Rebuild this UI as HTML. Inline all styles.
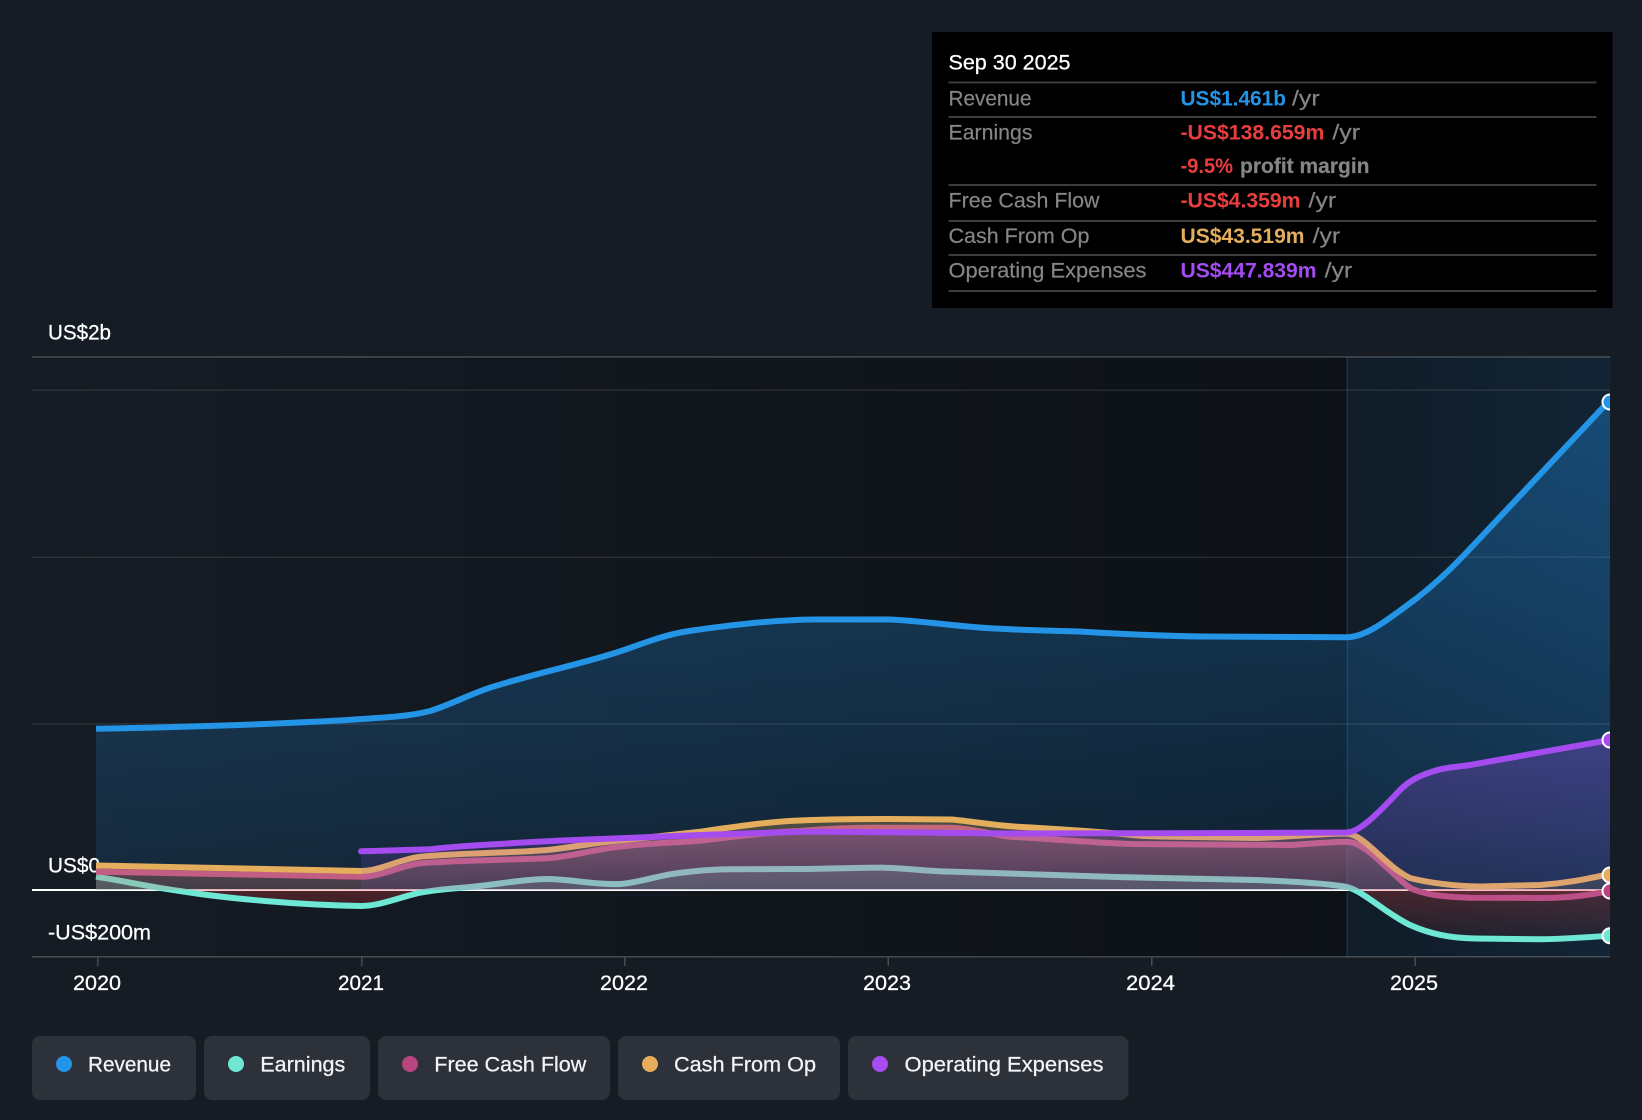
<!DOCTYPE html>
<html><head><meta charset="utf-8"><title>Chart</title>
<style>html,body{margin:0;padding:0;background:#151c24;width:1642px;height:1120px;overflow:hidden}
svg{display:block}text{font-family:"Liberation Sans",Arial,sans-serif;font-size:21px}
.l{fill:#fff;stroke:#fff;stroke-width:.25}.g{fill:#858585;stroke:#858585;stroke-width:.2}.b{font-weight:bold}.t{fill:#f3f4f6;stroke:#f3f4f6;stroke-width:.25}</style></head><body>
<svg width="1642" height="1120" viewBox="0 0 1642 1120" xmlns="http://www.w3.org/2000/svg">
<defs>
<linearGradient id="ov" x1="0" x2="1" y1="0" y2="0"><stop offset="0" stop-color="#000" stop-opacity="0"/><stop offset="1" stop-color="#000" stop-opacity=".38"/></linearGradient>
<linearGradient id="fc" x1="0" x2="1" y1="0" y2="0"><stop offset="0" stop-color="#101c27"/><stop offset="1" stop-color="#122435"/></linearGradient>
<linearGradient id="gR" gradientUnits="userSpaceOnUse" x1="0" x2="0" y1="402" y2="890"><stop offset="0" stop-color="#2196f3" stop-opacity=".34"/><stop offset="1" stop-color="#2196f3" stop-opacity=".11"/></linearGradient>
<linearGradient id="gC" gradientUnits="userSpaceOnUse" x1="0" x2="0" y1="820" y2="890"><stop offset="0" stop-color="#e4ae5c" stop-opacity=".28"/><stop offset="1" stop-color="#e4ae5c" stop-opacity=".12"/></linearGradient>
<linearGradient id="gF" gradientUnits="userSpaceOnUse" x1="0" x2="0" y1="828" y2="890"><stop offset="0" stop-color="#b84a85" stop-opacity=".32"/><stop offset="1" stop-color="#b84a85" stop-opacity=".14"/></linearGradient>
<linearGradient id="gO" gradientUnits="userSpaceOnUse" x1="0" x2="0" y1="740" y2="890"><stop offset="0" stop-color="#a855f7" stop-opacity=".28"/><stop offset="1" stop-color="#a855f7" stop-opacity=".1"/></linearGradient>
<linearGradient id="gN" gradientUnits="userSpaceOnUse" x1="0" x2="0" y1="889" y2="940"><stop offset="0" stop-color="#e83e3e" stop-opacity=".26"/><stop offset="1" stop-color="#e83e3e" stop-opacity=".06"/></linearGradient>
<clipPath id="chart"><rect x="32" y="340" width="1578" height="640"/></clipPath>
<clipPath id="pos"><rect x="32" y="340" width="1578" height="550"/></clipPath>
<clipPath id="neg"><rect x="32" y="889" width="1578" height="70"/></clipPath>
</defs>
<rect width="1642" height="1120" fill="#151c24"/>

<!-- backgrounds -->
<rect x="32" y="357" width="1315" height="600" fill="url(#ov)"/>
<rect x="1347" y="357" width="263" height="600" fill="url(#fc)"/>
<rect x="1346.5" y="357" width="1.5" height="600" fill="#2196f3" fill-opacity=".2"/>

<!-- grid -->
<g fill="#fff">
<rect x="32" y="356.2" width="1578" height="1.5" fill-opacity=".22"/>
<rect x="32" y="389.5" width="1578" height="1.5" fill-opacity=".1"/>
<rect x="32" y="556.5" width="1578" height="1.5" fill-opacity=".1"/>
<rect x="32" y="723.2" width="1578" height="1.5" fill-opacity=".1"/>
<rect x="32" y="889" width="1578" height="2"/>
<rect x="32" y="956" width="1578" height="1.5" fill-opacity=".22"/>
</g>
<g fill="#474b52">
<rect x="97" y="957" width="1.5" height="9"/><rect x="361" y="957" width="1.5" height="9"/><rect x="624" y="957" width="1.5" height="9"/><rect x="887.500" y="957" width="1.5" height="9"/><rect x="1151" y="957" width="1.5" height="9"/><rect x="1414.500" y="957" width="1.5" height="9"/>
</g>

<!-- axis labels -->
<text class="l" x="48" y="339.500" textLength="63" lengthAdjust="spacingAndGlyphs">US$2b</text>
<text class="l" x="48" y="872.500" textLength="52" lengthAdjust="spacingAndGlyphs">US$0</text>
<text class="l" x="48" y="939.500" textLength="103" lengthAdjust="spacingAndGlyphs">-US$200m</text>
<text class="l" x="73" y="990" textLength="48" lengthAdjust="spacingAndGlyphs">2020</text>
<text class="l" x="338" y="990" textLength="46" lengthAdjust="spacingAndGlyphs">2021</text>
<text class="l" x="600" y="990" textLength="48" lengthAdjust="spacingAndGlyphs">2022</text>
<text class="l" x="863" y="990" textLength="48" lengthAdjust="spacingAndGlyphs">2023</text>
<text class="l" x="1126" y="990" textLength="49" lengthAdjust="spacingAndGlyphs">2024</text>
<text class="l" x="1390" y="990" textLength="48" lengthAdjust="spacingAndGlyphs">2025</text>

<g clip-path="url(#chart)">
<!-- revenue -->
<path fill="url(#gR)" d="M96,728.7 C170,727.5 290,724 370,718.5 C400,716.500 415,715 430,711 C450,705 470,694 492,687 C540,672 590,662 624,650 C650,641 665,635 686,631.5 C730,625 780,619.5 817,619.5 L890,619.5 C925,621 960,627 995,628.5 C1030,630.5 1050,630.5 1079,631.5 C1120,634 1160,636 1204,636.5 L1346,637.3 C1365,637.5 1385,622 1417,598 C1435,584 1450,570 1467,552 L1610,400 L1610,890 L96,890 Z"/>
<path fill="none" stroke="#2394e6" stroke-width="6" d="M96,728.7 C170,727.5 290,724 370,718.5 C400,716.500 415,715 430,711 C450,705 470,694 492,687 C540,672 590,662 624,650 C650,641 665,635 686,631.5 C730,625 780,619.5 817,619.5 L890,619.5 C925,621 960,627 995,628.5 C1030,630.5 1050,630.5 1079,631.5 C1120,634 1160,636 1204,636.5 L1346,637.3 C1365,637.5 1385,622 1417,598 C1435,584 1450,570 1467,552 L1610,400"/>

<!-- earnings -->
<path clip-path="url(#neg)" fill="url(#gN)" d="M96,876.7 C130,882 150,887 180,891 C230,899 300,905 361,906 C380,906 400,897 420,892.7 C440,889 455,888.500 473,886.7 L1347,887 C1365,892 1385,913 1410,925 C1430,934 1450,938 1475,938.5 L1540,939.3 C1565,939 1590,937 1610,935.7 L1610,889 L96,889 Z"/>
<path clip-path="url(#pos)" fill="#6ee7d4" fill-opacity=".2" d="M96,876.7 C130,882 150,887 180,891 L420,892.7 C440,889 455,888.500 473,886.7 C500,884 525,879 547,879 C570,879 595,885 620,884 C640,883 660,874 690,871.7 C710,869.5 720,869.3 733,869.3 L800,869 C830,869 860,867.5 884,867.7 C905,868 925,871 947,871.5 L1116,877 L1256,880 C1290,881.5 1325,883 1347,887 L1365,895 L96,895 Z"/>
<path fill="none" stroke="#6ee7d4" stroke-width="6" d="M96,876.7 C130,882 150,887 180,891 C230,899 300,905 361,906 C380,906 400,897 420,892.7 C440,889 455,888.500 473,886.7 C500,884 525,879 547,879 C570,879 595,885 620,884 C640,883 660,874 690,871.7 C710,869.5 720,869.3 733,869.3 L800,869 C830,869 860,867.5 884,867.7 C905,868 925,871 947,871.5 L1116,877 L1256,880 C1290,881.5 1325,883 1347,887 C1365,892 1385,913 1410,925 C1430,934 1450,938 1475,938.5 L1540,939.3 C1565,939 1590,937 1610,935.7"/>

<!-- free cash flow -->
<path clip-path="url(#pos)" fill="url(#gF)" d="M96,871.7 L361,876.7 C380,877 400,866 420,863.3 C460,860 510,860 547,858.3 C575,856 595,849 620,846.7 C650,843 670,843 700,840.7 C740,836 770,832 800,831 C830,828.5 860,827.5 884,827.7 L951,827.7 C975,829 990,834 1010,836.7 C1050,839 1100,843 1133,844 L1291,845 C1310,844 1330,841.7 1347,841.7 C1365,842 1385,868 1410,888 L1415,895 L96,895 Z"/>
<path clip-path="url(#neg)" fill="url(#gN)" fill-opacity=".5" d="M1405,889 L1410,888 C1425,895 1445,897 1470,897.7 L1540,898 C1570,898 1590,895 1610,891 L1610,889 Z"/>
<path fill="none" stroke="#bb4f88" stroke-width="6" d="M96,871.7 L361,876.7 C380,877 400,866 420,863.3 C460,860 510,860 547,858.3 C575,856 595,849 620,846.7 C650,843 670,843 700,840.7 C740,836 770,832 800,831 C830,828.5 860,827.5 884,827.7 L951,827.7 C975,829 990,834 1010,836.7 C1050,839 1100,843 1133,844 L1291,845 C1310,844 1330,841.7 1347,841.7 C1365,842 1385,868 1410,888 C1425,895 1445,897 1470,897.7 L1540,898 C1570,898 1590,895 1610,891"/>

<!-- cash from op -->
<path clip-path="url(#pos)" fill="url(#gC)" d="M96,865.5 L361,871 C380,871 400,859 420,856.7 C460,853 510,853 547,850 C575,847 595,842.5 620,840.5 C650,837 680,834 700,831.7 C740,826 770,821.5 800,820.5 C830,819 860,819 884,819 L951,819.5 C970,821 990,825 1017,826.7 C1060,829 1100,832 1123,834 C1135,835.5 1150,836.5 1160,836.5 L1256,838 C1290,837 1320,833.5 1347,833.5 C1365,835 1385,866 1410,878 C1430,883 1455,886 1480,886.5 L1540,885 C1570,883 1590,878 1610,874 L1610,890 L96,890 Z"/>
<path fill="none" stroke="#e4ae5c" stroke-width="6" d="M96,865.5 L361,871 C380,871 400,859 420,856.7 C460,853 510,853 547,850 C575,847 595,842.5 620,840.5 C650,837 680,834 700,831.7 C740,826 770,821.5 800,820.5 C830,819 860,819 884,819 L951,819.5 C970,821 990,825 1017,826.7 C1060,829 1100,832 1123,834 C1135,835.5 1150,836.5 1160,836.5 L1256,838 C1290,837 1320,833.5 1347,833.5 C1365,835 1385,866 1410,878 C1430,883 1455,886 1480,886.5 L1540,885 C1570,883 1590,878 1610,874"/>

<!-- operating expenses -->
<path clip-path="url(#pos)" fill="url(#gO)" d="M361,851.3 L430,849.3 C450,847 480,845 500,844 C540,841 590,839.5 620,838.3 L700,835 L800,831.7 L830,831.7 L1007,833.5 L1100,833.3 L1250,833 L1347,832.5 C1358,832 1372,820 1400,790 C1410,780 1420,775 1440,769.3 C1450,767 1460,766.5 1470,765 L1610,740 L1610,890 L361,890 Z"/>
<path fill="none" stroke="#a44cf0" stroke-width="6" stroke-linecap="round" d="M361,851.3 L430,849.3 C450,847 480,845 500,844 C540,841 590,839.5 620,838.3 L700,835 L800,831.7 L830,831.7 L1007,833.5 L1100,833.3 L1250,833 L1347,832.5 C1358,832 1372,820 1400,790 C1410,780 1420,775 1440,769.3 C1450,767 1460,766.5 1470,765 L1610,740"/>

<!-- end markers -->
<g stroke="#fff" stroke-width="2">
<circle cx="1610" cy="402" r="7.500" fill="#2394e6"/>
<circle cx="1610" cy="740" r="7.500" fill="#a44cf0"/>
<circle cx="1610" cy="875" r="7.500" fill="#e4ae5c"/>
<circle cx="1610" cy="891" r="7.500" fill="#bb4080"/>
<circle cx="1610" cy="935.7" r="7.500" fill="#6ee7d4"/>
</g>
</g>

<!-- tooltip -->
<rect x="932" y="32" width="680.500" height="276" fill="#000"/>
<g fill="#3d3d3d">
<rect x="948.500" y="81.500" width="648" height="2"/>
<rect x="948.500" y="116" width="648" height="2"/>
<rect x="948.500" y="184" width="648" height="2"/>
<rect x="948.500" y="220" width="648" height="2"/>
<rect x="948.500" y="254" width="648" height="2"/>
<rect x="948.500" y="290" width="648" height="2"/>
</g>
<text class="l" x="948.500" y="69.500" textLength="122" lengthAdjust="spacingAndGlyphs">Sep 30 2025</text>
<text class="g" x="948.500" y="105.500" textLength="83" lengthAdjust="spacingAndGlyphs">Revenue</text>
<text class="g" x="948.500" y="139.500" textLength="84" lengthAdjust="spacingAndGlyphs">Earnings</text>
<text class="g" x="948.500" y="207.500" textLength="151" lengthAdjust="spacingAndGlyphs">Free Cash Flow</text>
<text class="g" x="948.500" y="243" textLength="141" lengthAdjust="spacingAndGlyphs">Cash From Op</text>
<text class="g" x="948.500" y="277.500" textLength="198" lengthAdjust="spacingAndGlyphs">Operating Expenses</text>

<text class="b" fill="#2394e6" x="1180.500" y="105.500" textLength="105.500" lengthAdjust="spacingAndGlyphs">US$1.461b</text>
<text class="g" x="1292" y="105.500" textLength="27.600" lengthAdjust="spacingAndGlyphs">/yr</text>
<text class="b" fill="#e83e3e" x="1180.500" y="139.500" textLength="143.800" lengthAdjust="spacingAndGlyphs">-US$138.659m</text>
<text class="g" x="1332.400" y="139.500" textLength="27.600" lengthAdjust="spacingAndGlyphs">/yr</text>
<text class="b" fill="#e83e3e" x="1180.500" y="173" textLength="52.500" lengthAdjust="spacingAndGlyphs">-9.5%</text>
<text class="g" x="1240" y="173" textLength="129.500" lengthAdjust="spacingAndGlyphs" font-weight="bold">profit margin</text>
<text class="b" fill="#e83e3e" x="1180.500" y="207.500" textLength="120" lengthAdjust="spacingAndGlyphs">-US$4.359m</text>
<text class="g" x="1308.500" y="207.500" textLength="27.600" lengthAdjust="spacingAndGlyphs">/yr</text>
<text class="b" fill="#e4ae5c" x="1180.500" y="243" textLength="124" lengthAdjust="spacingAndGlyphs">US$43.519m</text>
<text class="g" x="1312.600" y="243" textLength="27.600" lengthAdjust="spacingAndGlyphs">/yr</text>
<text class="b" fill="#a44cf0" x="1180.500" y="277.500" textLength="136" lengthAdjust="spacingAndGlyphs">US$447.839m</text>
<text class="g" x="1324.600" y="277.500" textLength="27.600" lengthAdjust="spacingAndGlyphs">/yr</text>

<!-- legend -->
<g fill="#2d3139">
<rect x="32" y="1036" width="164" height="64" rx="8"/>
<rect x="204" y="1036" width="166" height="64" rx="8"/>
<rect x="378" y="1036" width="232" height="64" rx="8"/>
<rect x="618" y="1036" width="222" height="64" rx="8"/>
<rect x="848" y="1036" width="280.500" height="64" rx="8"/>
</g>
<circle cx="64" cy="1064" r="8" fill="#2394e6"/>
<circle cx="236" cy="1064" r="8" fill="#6ee7d4"/>
<circle cx="410" cy="1064" r="8" fill="#b84480"/>
<circle cx="650" cy="1064" r="8" fill="#e4ae5c"/>
<circle cx="880" cy="1064" r="8" fill="#a44cf0"/>
<text class="t" x="88" y="1071.700" textLength="83" lengthAdjust="spacingAndGlyphs">Revenue</text>
<text class="t" x="260.300" y="1071.700" textLength="85" lengthAdjust="spacingAndGlyphs">Earnings</text>
<text class="t" x="434.300" y="1071.700" textLength="152" lengthAdjust="spacingAndGlyphs">Free Cash Flow</text>
<text class="t" x="674" y="1071.700" textLength="142" lengthAdjust="spacingAndGlyphs">Cash From Op</text>
<text class="t" x="904.500" y="1071.700" textLength="199" lengthAdjust="spacingAndGlyphs">Operating Expenses</text>
</svg>
</body></html>
